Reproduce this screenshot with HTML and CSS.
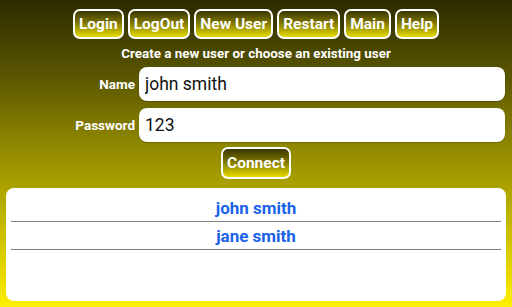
FILE: index.html
```html
<!DOCTYPE html>
<html lang="en">
<head>
  <meta charset="UTF-8" />
  <title>Users</title>
  <link rel="stylesheet" href="styles.css">
</head>
<body>

<nav class="toolbar">
  <button class="btn">Login</button>
  <button class="btn">LogOut</button>
  <button class="btn">New User</button>
  <button class="btn">Restart</button>
  <button class="btn">Main</button>
  <button class="btn">Help</button>
</nav>

<p class="hint">Create a new user or choose an existing user</p>

<form class="login-form">
  <label for="userName">Name</label>
  <input type="text" id="userName" value="john smith">
  <label for="userPass">Password</label>
  <input type="text" id="userPass" value="123">
</form>

<div class="connect-row">
  <button class="btn btn-connect">Connect</button>
</div>

<section class="user-list">
  <div class="user-item">john smith</div>
  <div class="user-item">jane smith</div>
</section>

</body>
</html>
```

FILE: styles.css
```css
html, body {
  height: 100%;
}

body {
  font-family: Roboto, 'Liberation Sans', sans-serif;
  margin: 0;
  padding: 0;
  color: white;
  background: linear-gradient(#2c2b00 0%, #5a5600 25%, #8a8300 45%, #a9a000 60%, #d2c600 80%, #fff000 100%);
  display: flex;
  flex-direction: column;
  overflow: hidden;
}

.toolbar {
  display: flex;
  justify-content: center;
  gap: 4px;
  padding-top: 9px;
}

.btn {
  font-family: inherit;
  font-weight: 700;
  font-size: 15.5px;
  color: white;
  height: 30px;
  padding: 0 4px;
  border: 2px solid white;
  border-radius: 7px;
  background: linear-gradient(#3a3700, #7d7500 45%, #e8dc00 100%);
  cursor: pointer;
}

.hint {
  margin: 7px 0 0;
  text-align: center;
  font-size: 13.4px;
  font-weight: 700;
  line-height: 15px;
}

.login-form {
  display: grid;
  grid-template-columns: 135px 1fr;
  column-gap: 4px;
  row-gap: 7px;
  align-items: center;
  padding: 0 7px 0 0;
  margin: 6px 0 0;
}

.login-form label {
  text-align: right;
  font-size: 13.5px;
  font-weight: 700;
}

.login-form input {
  font-family: inherit;
  font-size: 17.5px;
  color: #111;
  height: 34px;
  box-sizing: border-box;
  padding: 0 6px;
  border: none;
  border-radius: 8px;
  background: white;
  box-shadow: 0 1px 1px rgba(0,0,0,0.25);
}

.connect-row {
  display: flex;
  justify-content: center;
  margin-top: 5px;
}

.btn-connect {
  font-size: 15.5px;
  height: 32px;
  padding: 0 4px;
}

.user-list {
  margin: 9px 6px 6px;
  flex: 1;
  background: white;
  border-radius: 8px;
  padding: 6px 5px 0;
}

.user-item {
  height: 27px;
  line-height: 28px;
  text-align: center;
  color: #1a62ea;
  font-size: 17px;
  font-weight: 700;
  border-bottom: 1px solid #808080;
}
```
